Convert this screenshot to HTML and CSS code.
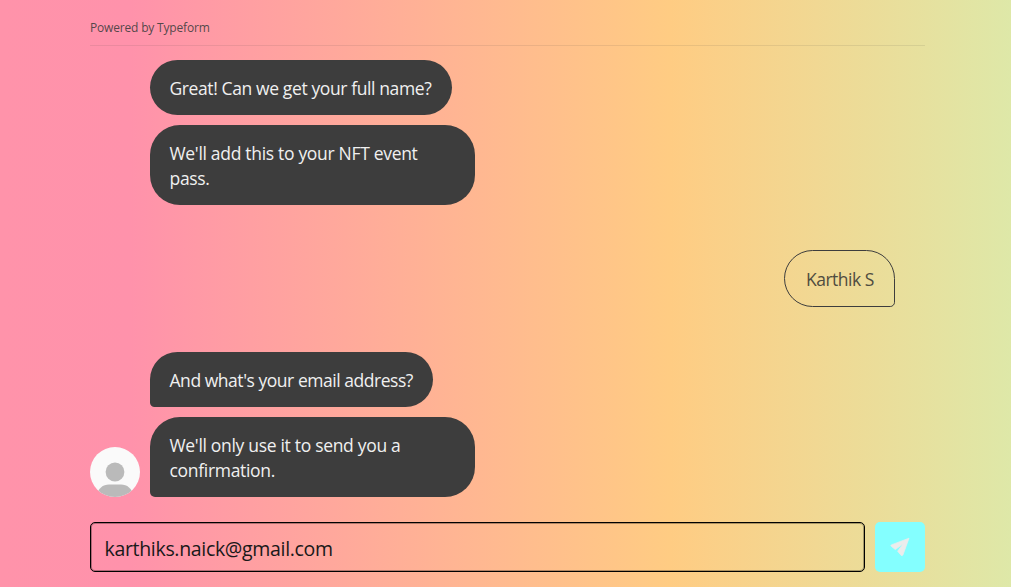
FILE: index.html
```
<!DOCTYPE html>
<html lang="en">
<head>
<meta charset="utf-8">
<title>Typeform chat</title>
<link rel="stylesheet" href="styles.css">
</head>
<body>
<main class="chat">
  <header class="header"><span class="brand">Powered by Typeform</span></header>
  <section class="messages">
    <div class="group">
      <div class="bubble name-question"><span class="t1">Great! Can we get your full name?</span></div>
      <div class="bubble wide"><span class="t2">We'll add this to your NFT event<br>pass.</span></div>
    </div>
    <div class="reply"><span class="t3">Karthik S</span></div>
    <div class="row">
      <svg class="avatar" viewBox="0 0 50 50" aria-hidden="true">
        <defs><clipPath id="disc"><circle cx="25" cy="25" r="25"/></clipPath></defs>
        <g clip-path="url(#disc)">
          <rect width="50" height="50" fill="#fafafa"/>
          <circle cx="25" cy="25" r="9.4" fill="#bababa"/>
          <path d="M6 50C8 41 13 37.5 19 37.5H31C37 37.5 42 41 44 50Z" fill="#bababa"/>
        </g>
      </svg>
      <div class="group">
        <div class="bubble email-question tail"><span class="t4">And what's your email address?</span></div>
        <div class="bubble wide tail"><span class="t5">We'll only use it to send you a<br>confirmation.</span></div>
      </div>
    </div>
  </section>
  <footer class="composer">
    <div class="field"><span class="t6">karthiks.naick@gmail.com</span></div>
    <button class="send" aria-label="Send">
      <svg width="50" height="50" viewBox="0 0 50 50"><path d="M34 16.2L16.3 22.9Q15.5 23.4 16.2 24.2L20.3 27.6L28.2 21.8L22.6 29.2L26.2 33.4Q27.3 34.2 28 32.8Z" fill="#ececec" stroke="#ececec" stroke-width=".7" stroke-linejoin="round"/></svg>
    </button>
  </footer>
</main>
</body>
</html>
```
FILE: styles.css
```
* { box-sizing: border-box; }
body {
  margin: 0;
  height: 587px;
  overflow: hidden;
  font-family: "Open Sans", "Noto Sans", sans-serif;
  background: linear-gradient(90deg, #ff93aa 0, #ff92ab 130px, #ffcc83 670px, #dee8a8 1011px);
}
.chat { width: 835px; height: 587px; margin-left: 90px; display: flex; flex-direction: column; }
.header {
  height: 46px;
  padding-top: 19px;
  border-bottom: 1px solid rgba(61, 61, 61, .1);
  font-size: 12px;
  line-height: 17px;
  color: rgba(61, 61, 61, .9);
}
.messages { padding: 14px 30px 0 0; display: flex; flex-direction: column; gap: 45px; }
.group { display: flex; flex-direction: column; align-items: flex-start; gap: 10px; }
.messages > .group { margin-left: 60px; }
.bubble {
  padding: 16px 0 14px 19.5px;
  border-radius: 30px;
  background: #3d3d3d;
  color: #f0f0f0;
  font-size: 17.5px;
  line-height: 25px;
  white-space: nowrap;
}
.name-question { width: 302px; border-radius: 27.5px; }
.email-question { width: 283px; }
.wide { width: 325px; }
.tail { border-bottom-left-radius: 5px; }
.reply {
  align-self: flex-end;
  width: 111px;
  height: 57px;
  padding: 16px 0 0 21px;
  border: 1px solid #3d3d3d;
  border-radius: 30px 30px 5px 30px;
  color: #4f4c40;
  font-size: 17.5px;
  line-height: 25px;
  white-space: nowrap;
}
.row { display: flex; align-items: flex-end; gap: 10px; }
.avatar { width: 50px; height: 50px; flex: none; }
.composer { display: flex; gap: 10px; margin-top: 25px; }
.field {
  width: 775px;
  height: 50px;
  padding-left: 13.5px;
  border: 1px solid #000;
  border-radius: 5px;
  box-shadow: inset 0 0 0 1px rgba(0, 0, 0, .3);
  font-size: 19.5px;
  line-height: 51px;
  color: #191919;
}
.send { width: 50px; height: 50px; padding: 0; border: 0; border-radius: 5px; background: #84ffff; }
.send svg { display: block; }
.brand { letter-spacing: -.18px; }
.t1 { letter-spacing: -.39px; }
.t2 { letter-spacing: -.31px; }
.t3 { letter-spacing: -.5px; }
.t4 { letter-spacing: -.46px; }
.t5 { letter-spacing: -.31px; }
.t6 { letter-spacing: -.32px; }
```
